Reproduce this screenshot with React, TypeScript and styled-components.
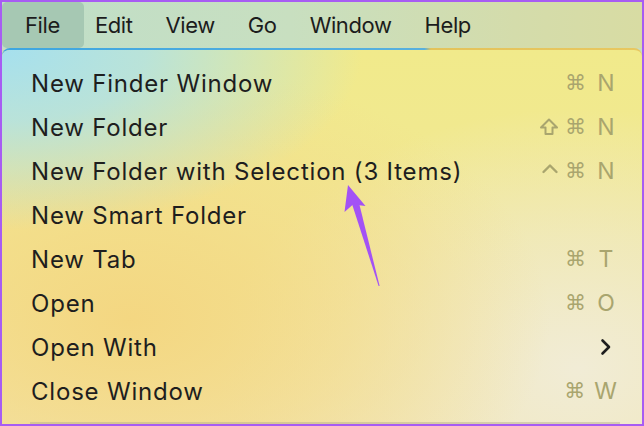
import styled, { createGlobalStyle } from "styled-components";

const GlobalStyle = createGlobalStyle`
  html, body {
    margin: 0;
    padding: 0;
    background: #ffffff;
  }
  body {
    font-family: "Inter", "DejaVu Sans", sans-serif;
  }
`;

const topMenus = ["File", "Edit", "View", "Go", "Window", "Help"];

type Mod = "cmd" | "shift" | "ctrl";

type Item = {
  label: string;
  mods?: Mod[];
  keyName?: string;
  submenu?: boolean;
};

const items: Item[] = [
  { label: "New Finder Window", mods: ["cmd"], keyName: "N" },
  { label: "New Folder", mods: ["shift", "cmd"], keyName: "N" },
  { label: "New Folder with Selection (3 Items)", mods: ["ctrl", "cmd"], keyName: "N" },
  { label: "New Smart Folder" },
  { label: "New Tab", mods: ["cmd"], keyName: "T" },
  { label: "Open", mods: ["cmd"], keyName: "O" },
  { label: "Open With", submenu: true },
  { label: "Close Window", mods: ["cmd"], keyName: "W" },
];

const SHORTCUT = "#a9a56e";

function ModKey({ mod }: { mod: Mod }) {
  if (mod === "shift") {
    return (
      <ModIcon viewBox="0 0 20 20" width="20" height="20">
        <path
          d="M10 2.5 L18 10.5 L13.5 10.5 L13.5 17 L6.5 17 L6.5 10.5 L2 10.5 Z"
          fill="none"
          stroke={SHORTCUT}
          strokeWidth="2"
          strokeLinejoin="round"
        />
      </ModIcon>
    );
  }
  if (mod === "ctrl") {
    return (
      <ModIcon viewBox="0 0 18 20" width="18" height="20">
        <path
          d="M2.5 11 L9 4.5 L15.5 11"
          fill="none"
          stroke={SHORTCUT}
          strokeWidth="2.4"
          strokeLinecap="round"
          strokeLinejoin="round"
        />
      </ModIcon>
    );
  }
  return <CmdGlyph>⌘</CmdGlyph>;
}

function App() {
  return (
    <>
      <GlobalStyle />
      <Frame>
        <MenuBar>
          {topMenus.map((m, i) => (
            <TopItem key={m} active={i === 0}>
              {m}
            </TopItem>
          ))}
        </MenuBar>
        <Panel>
          {items.map((it) => (
            <Row key={it.label}>
              <Label>{it.label}</Label>
              {it.keyName && (
                <Shortcut>
                  {it.mods?.map((m) => (
                    <ModKey key={m} mod={m} />
                  ))}
                  <KeyName>{it.keyName}</KeyName>
                </Shortcut>
              )}
              {it.submenu && (
                <Chevron viewBox="0 0 12 18" width="12" height="18">
                  <path
                    d="M2.5 2.5 L9 9 L2.5 15.5"
                    fill="none"
                    stroke="#1e1e1e"
                    strokeWidth="2.6"
                    strokeLinecap="round"
                    strokeLinejoin="round"
                  />
                </Chevron>
              )}
            </Row>
          ))}
          <Separator />
        </Panel>
        <Arrow viewBox="0 0 60 120" width="60" height="120">
          <path d="M15 14 L11.5 41 L20 33.5 L32.5 35 Z" fill="#a352f5" />
          <path d="M19 33 L26 32 L46.6 115 L45.6 115 Z" fill="#a352f5" />
        </Arrow>
      </Frame>
    </>
  );
}

export default App;

const Frame = styled.div`
  position: relative;
  width: 644px;
  height: 426px;
  box-sizing: border-box;
  border: 2px solid #a75cf3;
  overflow: hidden;
  display: flex;
  flex-direction: column;
  background: #c9dcc0;
`;

const MenuBar = styled.div`
  height: 46px;
  flex-shrink: 0;
  display: flex;
  align-items: stretch;
  background: linear-gradient(90deg, #bfdec9 0%, #c8dfc0 45%, #d4dcab 80%, #d8dca3 100%);
`;

const TopItem = styled.div<{ active?: boolean }>`
  display: flex;
  align-items: center;
  padding: 0 16px 0 17px;
  font-size: 22px;
  letter-spacing: -0.4px;
  color: #1c1c1c;
  border-radius: 5px;
  background: ${({ active }) => (active ? "#a6c8b3" : "transparent")};
  &:first-child {
    padding: 0 24px 0 23px;
  }
  &:nth-child(2) {
    padding-left: 11px;
  }
`;

const Panel = styled.div`
  flex: 1;
  display: flex;
  flex-direction: column;
  padding: 11px 0 0 0;
  border-radius: 8px 8px 0 0;
  border-top: 2px solid transparent;
  background:
    radial-gradient(ellipse 360px 180px at 0% 0%, rgba(166, 224, 238, 1) 0%, rgba(176, 226, 230, 0.85) 40%, rgba(200, 228, 200, 0) 100%) padding-box,
    radial-gradient(ellipse 420px 260px at 20% 72%, rgba(244, 214, 128, 0.95) 0%, rgba(244, 218, 135, 0.6) 50%, rgba(244, 222, 140, 0) 100%) padding-box,
    radial-gradient(ellipse 360px 260px at 90% 85%, rgba(241, 236, 214, 1) 0%, rgba(240, 234, 200, 0.7) 50%, rgba(240, 232, 180, 0) 100%) padding-box,
    linear-gradient(180deg, #f1ea8b 0%, #f1e796 60%, #f2e4b0 100%) padding-box,
    linear-gradient(90deg, #3ea6e0 0%, #58b0de 66%, #e4c35a 67%, #e8c860 100%) border-box;
`;

const Row = styled.div`
  height: 44px;
  flex-shrink: 0;
  display: flex;
  align-items: center;
  justify-content: space-between;
  padding: 0 25px 0 29px;
`;

const Label = styled.span`
  font-size: 24px;
  letter-spacing: 0.8px;
  color: #1e1e1e;
`;

const Shortcut = styled.span`
  display: flex;
  align-items: center;
  gap: 6px;
  color: ${SHORTCUT};
  font-size: 23px;
`;

const CmdGlyph = styled.span`
  font-family: "DejaVu Sans", sans-serif;
  font-size: 21px;
  width: 20px;
  text-align: center;
`;

const ModIcon = styled.svg`
  display: block;
`;

const KeyName = styled.span`
  display: inline-block;
  min-width: 22px;
  margin-left: 4px;
  text-align: center;
`;

const Chevron = styled.svg`
  margin-right: 5px;
`;

const Separator = styled.div`
  height: 3px;
  margin: 9px 22px 0 28px;
  background: rgba(180, 170, 140, 0.45);
`;

const Arrow = styled.svg`
  position: absolute;
  left: 331px;
  top: 169px;
`;
